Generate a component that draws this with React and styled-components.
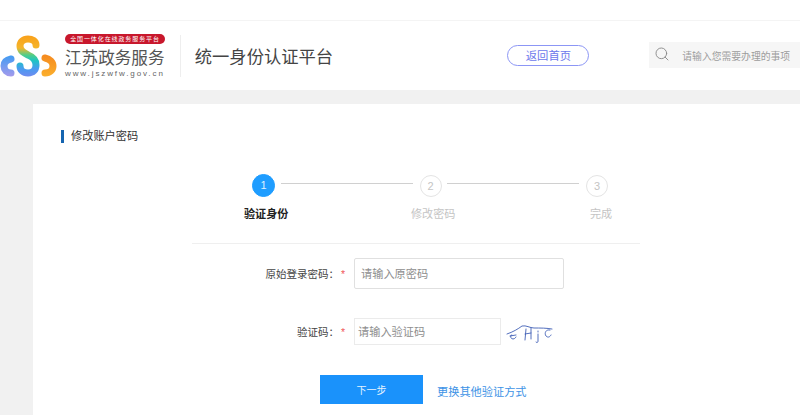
import React from 'react';
import styled, { createGlobalStyle } from 'styled-components';
import { Search } from 'lucide-react';

const GlobalStyle = createGlobalStyle`
  html, body {
    margin: 0;
    padding: 0;
    height: 415px;
    overflow: hidden;
    background: #f1f1f1;
    font-family: "Liberation Sans", "Noto Sans CJK SC", sans-serif;
  }
  * { box-sizing: border-box; }
`;

const STEPS = [
  { num: 1, label: '验证身份', active: true },
  { num: 2, label: '修改密码' },
  { num: 3, label: '完成' }
];

const App = () => (
  <>
    <GlobalStyle />
    <TopStrip />
    <Header>
      <LogoMark />
      <LogoText>
        <LogoPill>全国一体化在线政务服务平台</LogoPill>
        <LogoName>江苏政务服务</LogoName>
        <LogoUrl>www.jszwfw.gov.cn</LogoUrl>
      </LogoText>
      <HeaderDivider />
      <PlatformTitle>统一身份认证平台</PlatformTitle>
      <HomeButton>返回首页</HomeButton>
      <SearchBox>
        <SearchIcon size={16} strokeWidth={1.4} color="#8a8a8a" />
        <SearchHint>请输入您需要办理的事项</SearchHint>
      </SearchBox>
    </Header>
    <Card>
      <SectionTitle>修改账户密码</SectionTitle>
      <Track>
        {STEPS.map((step, i) => (
          <React.Fragment key={step.num}>
            {i > 0 && <TrackLine />}
            <StepDot $active={step.active}>{step.num}</StepDot>
          </React.Fragment>
        ))}
      </Track>
      <StepLabels>
        {STEPS.map((step) => (
          <StepLabel key={step.num} $active={step.active}>{step.label}</StepLabel>
        ))}
      </StepLabels>
      <Divider />
      <FormRow>
        <FieldLabel>原始登录密码：<Star>*</Star></FieldLabel>
        <PasswordInput placeholder="请输入原密码" />
      </FormRow>
      <CaptchaRow>
        <FieldLabel>验证码：<Star>*</Star></FieldLabel>
        <CaptchaInput placeholder="请输入验证码" />
        <Captcha />
      </CaptchaRow>
      <Actions>
        <NextButton>下一步</NextButton>
        <SwitchLink>更换其他验证方式</SwitchLink>
      </Actions>
    </Card>
  </>
);

const LogoMark = () => (
  <LogoSvg width="57" height="42" viewBox="0 0 57 42" fill="none" strokeLinecap="round" strokeWidth="7">
    <defs>
      <linearGradient id="logoS" gradientUnits="userSpaceOnUse" x1="28" y1="1" x2="28" y2="41">
        <stop offset="0" stopColor="#f9a11b" />
        <stop offset="0.3" stopColor="#f5b52a" />
        <stop offset="0.48" stopColor="#4fce8a" />
        <stop offset="0.62" stopColor="#1fc4c4" />
        <stop offset="0.82" stopColor="#4a9bf0" />
        <stop offset="1" stopColor="#6d8cf0" />
      </linearGradient>
      <linearGradient id="logoLeft" gradientUnits="userSpaceOnUse" x1="8" y1="20" x2="8" y2="42">
        <stop offset="0" stopColor="#3f9bf2" />
        <stop offset="1" stopColor="#a79bec" />
      </linearGradient>
      <linearGradient id="logoRight" gradientUnits="userSpaceOnUse" x1="48" y1="20" x2="48" y2="42">
        <stop offset="0" stopColor="#f58a1f" />
        <stop offset="1" stopColor="#fbb02d" />
      </linearGradient>
    </defs>
    <path stroke="url(#logoS)" d="M36 10C36 6 32 4 28 4C23 4 20 7 20 11C20 16 24 18 28 20C33 22 36 25 36 30C36 35 33 38 28 38C23 38 20 35 20 31" />
    <path stroke="url(#logoLeft)" d="M11 24C6 25 4 28 4 31C4 35 7 38 11 38" />
    <path stroke="url(#logoRight)" d="M45 23C50 24 53 27 53 31C53 35 50 38 45 38" />
  </LogoSvg>
);

const Captcha = () => (
  <CaptchaSvg width="50" height="22" viewBox="0 0 50 22" fill="none" stroke="#3f5fb5" strokeWidth="0.9" strokeLinecap="round">
    <path d="M2 11C8 9 13 6 17 3C21 2 25 5 29 5C35 5 42 5 47 6" />
    <path d="M7 12C5 11 5 16 8 16C10 16 11 14 11 14M5 13L11 12" />
    <path d="M20 17L21 6M26 5L26 16M20 11L26 10" />
    <path d="M33 11L33 18C33 20 31 20 31 19M33 8L33 9" />
    <path d="M45 7C41 6 39 10 41 13C43 15 45 14 46 12" />
  </CaptchaSvg>
);

const TopStrip = styled.div`
  height: 21px;
  background: #fff;
  border-bottom: 1px solid #f4f4f4;
`;

const Header = styled.header`
  display: flex;
  align-items: center;
  height: 69px;
  background: #fff;
`;

const LogoSvg = styled.svg`
  flex: none;
  margin-top: 1px;
`;

const LogoText = styled.div`
  display: flex;
  flex-direction: column;
  width: 102px;
  margin-left: 8px;
  margin-top: 1px;
`;

const LogoPill = styled.div`
  width: 100px;
  height: 10px;
  border-radius: 5px;
  background: #c8172c;
  color: #fff;
  font-size: 6px;
  letter-spacing: 0.9px;
  line-height: 10px;
  text-align: center;
  white-space: nowrap;
`;

const LogoName = styled.div`
  margin-top: 5px;
  color: #555;
  font-size: 16.6px;
  line-height: 20px;
  white-space: nowrap;
`;

const LogoUrl = styled.div`
  color: #666;
  font-size: 8px;
  line-height: 9px;
  letter-spacing: 1.9px;
  white-space: nowrap;
`;

const HeaderDivider = styled.div`
  width: 1px;
  height: 42px;
  margin-left: 13px;
  background: #eeeeee;
`;

const PlatformTitle = styled.h1`
  margin: 0 0 0 14px;
  width: 139px;
  color: #444;
  font-size: 17.3px;
  font-weight: 400;
  white-space: nowrap;
`;

const HomeButton = styled.div`
  width: 82px;
  height: 21px;
  margin-left: 174px;
  border: 1px solid #8c96f5;
  border-radius: 11px;
  color: #6c78ec;
  font-size: 11.3px;
  line-height: 20px;
  text-align: center;
`;

const SearchBox = styled.div`
  display: flex;
  align-items: center;
  width: 151px;
  height: 26px;
  margin-left: 60px;
  margin-top: -2px;
  padding-left: 5px;
  background: #f6f6f6;
`;

const SearchIcon = styled(Search)`
  flex: none;
  margin-top: -1px;
`;

const SearchHint = styled.span`
  margin-left: 12px;
  margin-top: 2px;
  color: #9d9d9d;
  font-size: 9.8px;
  white-space: nowrap;
`;

const Card = styled.main`
  height: 311px;
  margin: 14px 0 0 33px;
  padding-top: 26px;
  background: #fff;
`;

const SectionTitle = styled.h2`
  height: 13px;
  margin: 0 0 0 28px;
  padding-left: 7px;
  border-left: 3px solid #1565b0;
  color: #333;
  font-size: 11.2px;
  font-weight: 400;
  line-height: 13px;
`;

const Track = styled.div`
  display: flex;
  align-items: center;
  height: 23px;
  margin: 31px 0 0 219px;
`;

const StepDot = styled.div`
  flex: none;
  width: ${(p) => (p.$active ? '23px' : '22px')};
  height: ${(p) => (p.$active ? '23px' : '22px')};
  border-radius: 50%;
  border: 1px solid ${(p) => (p.$active ? '#1f9dff' : '#e4e4e4')};
  background: ${(p) => (p.$active ? '#1f9dff' : '#fff')};
  color: ${(p) => (p.$active ? '#dff1ff' : '#c4c4c4')};
  font-size: 11px;
  line-height: 20px;
  text-align: center;
`;

const TrackLine = styled.div`
  flex: none;
  width: 132px;
  height: 1px;
  margin: -5px 7px 0 5.5px;
  background: #d0d0d0;
`;

const StepLabels = styled.div`
  display: flex;
  margin: 10px 0 0 211px;
`;

const StepLabel = styled.div`
  width: 45px;
  color: ${(p) => (p.$active ? '#222' : '#c4c4c4')};
  font-size: 11.1px;
  font-weight: ${(p) => (p.$active ? 700 : 400)};
  line-height: 14px;
  white-space: nowrap;

  & + & {
    margin-left: 122px;
  }

  &:last-child {
    margin-left: 134px;
  }
`;

const Divider = styled.div`
  width: 448px;
  height: 1px;
  margin: 22px 0 0 159px;
  background: #efefef;
`;

const FormRow = styled.div`
  display: flex;
  align-items: center;
  margin-top: 14px;
  height: 31px;
`;

const CaptchaRow = styled(FormRow)`
  margin-top: 29px;
  height: 27px;
`;

const FieldLabel = styled.label`
  display: block;
  width: 321px;
  padding-right: 9px;
  color: #444;
  font-size: 10.5px;
  text-align: right;
  white-space: nowrap;
`;

const Star = styled.span`
  margin-left: 2px;
  color: #f0595b;
`;

const PasswordInput = styled.input`
  width: 210px;
  height: 31px;
  padding: 0 6px;
  border: 1px solid #e0e0e0;
  border-radius: 2px;
  outline: none;
  background: #fff;
  font: 11.2px "Liberation Sans", "Noto Sans CJK SC", sans-serif;

  &::placeholder {
    color: #8e8e8e;
    opacity: 1;
  }
`;

const CaptchaInput = styled(PasswordInput)`
  width: 147px;
  height: 27px;
  padding: 0 3px;
  border-color: #ebebeb;
  border-radius: 0;
`;

const CaptchaSvg = styled.svg`
  margin: 4px 0 0 4px;
  flex: none;
`;

const Actions = styled.div`
  display: flex;
  align-items: center;
  margin: 30px 0 0 287px;
`;

const NextButton = styled.button`
  width: 103px;
  height: 29px;
  border: 0;
  background: #1a92fb;
  color: #e6f4ff;
  font: 10px "Liberation Sans", "Noto Sans CJK SC", sans-serif;
`;

const SwitchLink = styled.a`
  margin: 2px 0 0 14px;
  color: #3d93e6;
  font-size: 11.2px;
  white-space: nowrap;
`;

export default App;
